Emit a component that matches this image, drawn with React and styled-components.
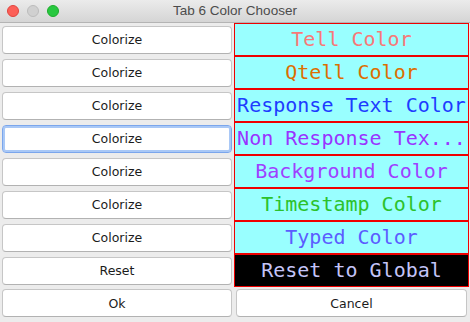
import React from "react";
import styled, { createGlobalStyle, css } from "styled-components";

const Global = createGlobalStyle`
  html, body {
    margin: 0;
    padding: 0;
    background: #ececec;
  }
  * { box-sizing: border-box; }
`;

const Window = styled.div`
  width: 470px;
  height: 322px;
  background: #ececec;
  display: flex;
  flex-direction: column;
  overflow: hidden;
  font-family: "Liberation Sans", "DejaVu Sans", sans-serif;
`;

const TitleBar = styled.div`
  height: 23px;
  flex: none;
  display: flex;
  align-items: center;
  justify-content: center;
  position: relative;
  background: linear-gradient(#ebebeb, #d5d5d5);
  border-bottom: 1px solid #b4b4b4;
  font-size: 13.5px;
  color: #4c4c4c;
  padding-bottom: 1px;
`;

const Lights = styled.div`
  position: absolute;
  left: 7px;
  top: 5px;
  display: flex;
  gap: 8px;
`;

const Light = styled.span`
  width: 12px;
  height: 12px;
  border-radius: 50%;
  background: ${({ color }) => color};
  border: 1px solid ${({ edge }) => edge};
`;

const Grid = styled.div`
  display: grid;
  grid-template-columns: 234px 235px;
  grid-auto-rows: 33px;
`;

const ButtonCell = styled.div`
  display: flex;
  align-items: center;
  padding: 0 2px;
`;

const Button = styled.div`
  width: ${({ wide }) => (wide ? 231 : 230)}px;
  height: 28px;
  background: #ffffff;
  border: 1px solid #c6c6c6;
  border-bottom-color: #b2b2b2;
  border-radius: 4px;
  display: flex;
  align-items: center;
  justify-content: center;
  font-family: "DejaVu Sans", "Liberation Sans", sans-serif;
  font-size: 12.5px;
  color: #1b1b1b;
  ${({ focused }) =>
    focused &&
    css`
      border-color: #7ba6ec;
      box-shadow: inset 0 0 0 2px #a9c8f6;
    `}
`;

const ColorBox = styled.div`
  height: 33px;
  border: 1px solid #ee0000;
  background: ${({ bg }) => bg || "#99ffff"};
  color: ${({ fg }) => fg};
  font-family: "DejaVu Sans Mono", "Liberation Mono", monospace;
  font-size: 20px;
  display: flex;
  align-items: center;
  justify-content: center;
  white-space: nowrap;
  overflow: hidden;
  padding-bottom: 2px;
`;

const Footer = styled.div`
  display: grid;
  grid-template-columns: 234px 236px;
  padding-top: 2px;
`;

const FooterCell = styled.div`
  padding: 0 ${({ right }) => right}px 0 ${({ left }) => left}px;
`;

const rows = [
  { label: "Tell Color", fg: "#f87878" },
  { label: "Qtell Color", fg: "#dd6e00" },
  { label: "Response Text Color", fg: "#1e3cff" },
  { label: "Non Response Tex...", fg: "#9a33ff", focused: true },
  { label: "Background Color", fg: "#9f40ff" },
  { label: "Timestamp Color", fg: "#2cc22c" },
  { label: "Typed Color", fg: "#5c5cff" },
];

export default function App() {
  return (
    <>
      <Global />
      <Window>
        <TitleBar>
          <Lights>
            <Light color="#fc5f57" edge="#e0443e" />
            <Light color="#d0d0d0" edge="#bcbcbc" />
            <Light color="#28c840" edge="#1dad2b" />
          </Lights>
          Tab 6 Color Chooser
        </TitleBar>
        <Grid>
          {rows.map((r) => (
            <React.Fragment key={r.label}>
              <ButtonCell>
                <Button focused={r.focused}>Colorize</Button>
              </ButtonCell>
              <ColorBox fg={r.fg}>{r.label}</ColorBox>
            </React.Fragment>
          ))}
          <ButtonCell>
            <Button>Reset</Button>
          </ButtonCell>
          <ColorBox bg="#000000" fg="#c4c4f8">
            Reset to Global
          </ColorBox>
        </Grid>
        <Footer>
          <FooterCell left={2} right={2}>
            <Button>Ok</Button>
          </FooterCell>
          <FooterCell left={2} right={3}>
            <Button wide>Cancel</Button>
          </FooterCell>
        </Footer>
      </Window>
    </>
  );
}
